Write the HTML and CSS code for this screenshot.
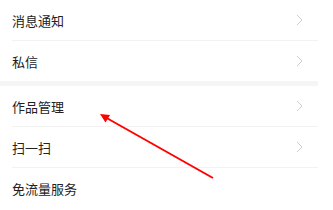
FILE: index.html
```html
<!DOCTYPE html>
<html lang="zh-CN">
<head>
    <meta charset="UTF-8">
    <title>设置</title>
    <link rel="stylesheet" href="styles.css">
</head>
<body>
    <div class="settings">
        <div class="group">
            <div class="row">
                <span class="label">消息通知</span>
                <svg class="chevron" viewBox="0 0 7 12"><polyline points="1,1 6,6 1,11"/></svg>
            </div>
            <div class="row">
                <span class="label">私信</span>
                <svg class="chevron" viewBox="0 0 7 12"><polyline points="1,1 6,6 1,11"/></svg>
            </div>
        </div>
        <div class="group">
            <div class="row">
                <span class="label">作品管理</span>
                <svg class="chevron" viewBox="0 0 7 12"><polyline points="1,1 6,6 1,11"/></svg>
            </div>
            <div class="row">
                <span class="label">扫一扫</span>
                <svg class="chevron" viewBox="0 0 7 12"><polyline points="1,1 6,6 1,11"/></svg>
            </div>
            <div class="row">
                <span class="label">免流量服务</span>
            </div>
        </div>
    </div>

    <!-- 红色标注箭头 -->
    <svg class="pointer" width="333" height="210" viewBox="0 0 333 210">
        <line x1="213" y1="178" x2="104" y2="116.5" stroke="#ff0000" stroke-width="2"/>
        <polygon points="100,114 110,115 105.5,122.5" fill="#ff0000"/>
    </svg>
</body>
</html>
```

FILE: styles.css
```css
body {
    margin: 0;
    background-color: #ffffff;
    font-family: "Noto Sans CJK SC", "Noto Sans", sans-serif;
    width: 333px;
    height: 210px;
    overflow: hidden;
    position: relative;
}

.settings {
    width: 318px;
}

.group + .group {
    border-top: 5px solid #f5f5f7;
}

.row {
    display: flex;
    align-items: center;
    justify-content: space-between;
    height: 40px;
    margin-left: 12px;
    padding-right: 15px;
    border-bottom: 1px solid #f2f2f2;
}

.group .row:last-child {
    border-bottom: none;
}

.label {
    font-size: 13px;
    color: #222222;
}

.chevron {
    width: 7px;
    height: 12px;
    fill: none;
    stroke: #cfcfcf;
    stroke-width: 1;
}

.pointer {
    position: absolute;
    left: 0;
    top: 0;
}
```
